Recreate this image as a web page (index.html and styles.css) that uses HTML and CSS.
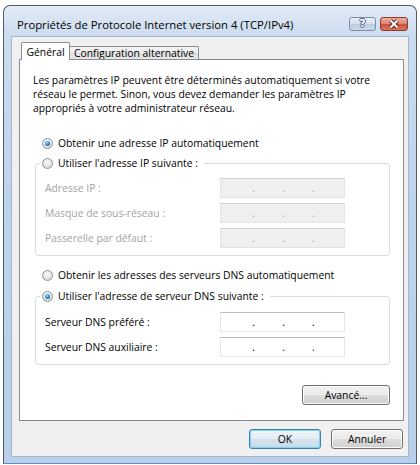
FILE: index.html
```html
<!DOCTYPE html>
<html lang="fr">
<head>
<meta charset="utf-8">
<title>Propriétés de Protocole Internet version 4 (TCP/IPv4)</title>
<link rel="stylesheet" href="styles.css">
</head>
<body>
<div class="window">
  <div class="titlebar">
    <span class="title">Propriétés de Protocole Internet version 4 (TCP/IPv4)</span>
    <div class="caps">
      <span class="cap help">?</span>
      <span class="cap close"><svg width="14" height="10" viewBox="0 0 14 10"><path d="M3.5 1.5 L10.5 8.5 M10.5 1.5 L3.5 8.5" stroke="#6b1f14" stroke-width="4"/><path d="M3.5 1.5 L10.5 8.5 M10.5 1.5 L3.5 8.5" stroke="#ffffff" stroke-width="2"/></svg></span>
    </div>
  </div>
  <div class="client">
    <div class="tabs">
      <div class="tab tab-active">Général</div>
      <div class="tab tab-other">Configuration alternative</div>
    </div>
    <div class="panel">
      <p class="desc">Les paramètres IP peuvent être déterminés automatiquement si votre<br>réseau le permet. Sinon, vous devez demander les paramètres IP<br>appropriés à votre administrateur réseau.</p>
      <div class="option"><span class="radio checked"></span>Obtenir une adresse IP automatiquement</div>
      <fieldset class="group group-ip">
        <legend class="legend"><span class="radio"></span>Utiliser l'adresse IP suivante :</legend>
        <div class="row disabled"><span class="label">Adresse IP :</span><span class="ip"><i></i><b>.</b><i></i><b>.</b><i></i><b>.</b><i></i></span></div>
        <div class="row disabled"><span class="label">Masque de sous-réseau :</span><span class="ip"><i></i><b>.</b><i></i><b>.</b><i></i><b>.</b><i></i></span></div>
        <div class="row disabled"><span class="label">Passerelle par défaut :</span><span class="ip"><i></i><b>.</b><i></i><b>.</b><i></i><b>.</b><i></i></span></div>
      </fieldset>
      <div class="option option-dns"><span class="radio"></span>Obtenir les adresses des serveurs DNS automatiquement</div>
      <fieldset class="group group-dns">
        <legend class="legend"><span class="radio checked"></span>Utiliser l'adresse de serveur DNS suivante :</legend>
        <div class="row"><span class="label">Serveur DNS préféré :</span><span class="ip"><i></i><b>.</b><i></i><b>.</b><i></i><b>.</b><i></i></span></div>
        <div class="row"><span class="label">Serveur DNS auxiliaire :</span><span class="ip"><i></i><b>.</b><i></i><b>.</b><i></i><b>.</b><i></i></span></div>
      </fieldset>
      <div class="adv-row"><button class="btn btn-adv">Avancé...</button></div>
    </div>
    <div class="dialog-buttons">
      <button class="btn btn-default">OK</button>
      <button class="btn">Annuler</button>
    </div>
  </div>
</div>
</body>
</html>
```
FILE: styles.css
```css
* { box-sizing: border-box; }
html, body { margin: 0; padding: 0; }
body {
  width: 420px;
  height: 465px;
  overflow: hidden;
  background: #ffffff;
  font-family: "Open Sans", "Noto Sans", sans-serif;
  font-size: 10.35px;
  color: #000;
}

.window {
  margin: 5px 0 0 3px;
  width: 414px;
  border: 1px solid #4f5c6d;
  border-bottom-color: #5d8fc4;
  border-radius: 7px 7px 0 0;
  background: linear-gradient(to bottom, #e2ebf6 0px, #cbdcef 30px, #bed3ec 200px, #b9cfea 100%);
  padding: 0 7px 6px 7px;
  display: flex;
  flex-direction: column;
}

.titlebar {
  height: 30px;
  display: flex;
  align-items: flex-start;
  padding: 0 1px 0 6px;
}
.title {
  flex: 1;
  margin-top: 11px;
  line-height: 16px;
  font-size: 11.3px;
  white-space: nowrap;
  color: #000;
}
.caps {
  display: flex;
  gap: 4px;
  margin-top: 11px;
}
.cap {
  height: 14px;
  border-radius: 3px;
  display: flex;
  align-items: center;
  justify-content: center;
}
.help {
  width: 27px;
  border: 1px solid #7b8ca4;
  background: linear-gradient(#e9eff7 0%, #d3deec 50%, #bccde2 51%, #cbd9eb 100%);
  color: #ffffff;
  font-family: "DejaVu Sans", sans-serif;
  font-weight: bold;
  font-size: 11px;
  line-height: 12px;
  text-shadow: 1px 0 0 #4a5f82, -1px 0 0 #4a5f82, 0 1px 0 #4a5f82, 0 -1px 0 #4a5f82;
}
.close {
  width: 28px;
  border: 1px solid #8a3b2e;
  background: linear-gradient(#eab0a2 0%, #dc8672 50%, #c9503a 51%, #d9765e 100%);
}

.client {
  background: #f0f0f0;
  border: 1px solid #a3b6ce;
  padding: 5px 4px 7px 7px;
  display: flex;
  flex-direction: column;
}

.tabs {
  display: flex;
  align-items: flex-end;
  height: 17px;
  margin-left: 2px;
}
.tab {
  text-align: center;
  white-space: nowrap;
  border: 1px solid #898c95;
  border-bottom: none;
}
.tab-active {
  width: 49px;
  height: 18px;
  margin-bottom: -1px;
  padding-top: 1px;
  line-height: 16px;
  background: #ffffff;
  border-radius: 2px 2px 0 0;
  position: relative;
  z-index: 1;
}
.tab-other {
  width: 129px;
  height: 13px;
  line-height: 12px;
  border-left: none;
  border-radius: 0 2px 0 0;
  background: linear-gradient(#f4f4f4 0%, #ececec 50%, #dedede 51%, #e6e6e6 100%);
}

.panel {
  background: #ffffff;
  border: 1px solid #898c95;
  padding: 13px 13px 15px 13px;
}
.desc {
  margin: 0;
  line-height: 14px;
}

.option {
  display: flex;
  align-items: center;
  line-height: 14px;
  height: 14px;
  margin: 21px 0 0 9px;
}
.option-dns { margin-top: 12px; }

.radio {
  flex: none;
  display: inline-block;
  width: 11px;
  height: 11px;
  margin-right: 5px;
  border-radius: 50%;
  border: 1px solid #939393;
  background: radial-gradient(circle at 50% 35%, #fbfbfb 0%, #e2e2e2 60%, #c9c9c9 100%);
  position: relative;
}
.radio.checked::after {
  content: "";
  position: absolute;
  left: 2px;
  top: 2px;
  width: 5px;
  height: 5px;
  border-radius: 50%;
  background: radial-gradient(circle at 40% 35%, #9fe0ff 0%, #2b8fd8 45%, #0c4a8e 100%);
}

.group {
  margin: 6px 0 0 2px;
  min-width: 0;
  border: 1px solid #d5dfe5;
  border-radius: 3px;
  padding: 8px 0 7px 9px;
}
.group-dns {
  margin-top: 7px;
  padding-top: 9px;
}
.legend {
  display: flex;
  align-items: center;
  height: 14px;
  line-height: 14px;
  padding: 0 6px 0 2px;
  margin-left: -5px;
}

.row {
  display: flex;
  align-items: center;
  height: 20px;
}
.row + .row { margin-top: 5px; }
.label {
  width: 175px;
  flex: none;
}
.disabled .label { color: #a3a3a3; }

.ip {
  width: 125px;
  height: 20px;
  display: grid;
  grid-template-columns: 1fr auto 1fr auto 1fr auto 1fr;
  align-items: center;
  padding: 0 2px 0 4px;
  background: #ffffff;
  border: 1px solid #e3e6ea;
  border-top-color: #b9bcc2;
}
.ip b { font-weight: normal; line-height: 14px; }
.disabled .ip {
  background: #efefef;
  border-color: #e4e4e4;
  border-top-color: #d2d2d2;
  color: #a3a3a3;
}

.adv-row {
  display: flex;
  justify-content: flex-end;
  margin-top: 20px;
}

.btn {
  height: 20px;
  width: 72px;
  padding: 0;
  font-family: inherit;
  font-size: 10.35px;
  color: #000;
  border: 1px solid #707070;
  border-radius: 3px;
  background: linear-gradient(#f2f2f2 0%, #ebebeb 50%, #dddddd 51%, #cfcfcf 100%);
  box-shadow: inset 0 0 0 1px #fbfbfb;
}
.btn-adv { width: 88px; }
.btn-default {
  border-color: #3c7fb1;
  background: linear-gradient(#f0f6fa 0%, #e3edf4 50%, #d4e2ec 51%, #c9dbe8 100%);
  box-shadow: inset 0 0 0 1px #7fd3f5;
}

.dialog-buttons {
  display: flex;
  justify-content: flex-end;
  gap: 10px;
  margin-top: 8px;
  padding-right: 1px;
}
```
